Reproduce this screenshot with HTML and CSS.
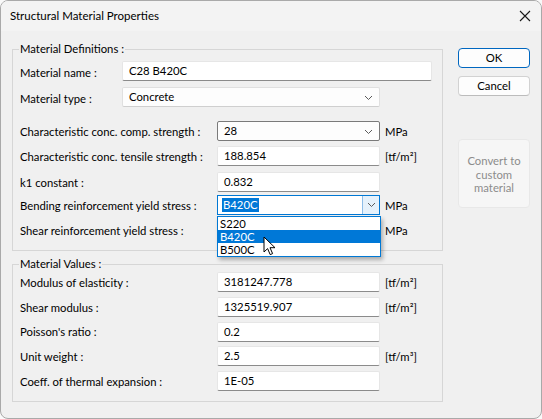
FILE: index.html
```html
<!DOCTYPE html>
<html>
<head>
<meta charset="utf-8">
<link rel="stylesheet" href="styles.css">
</head>
<body>
<div class="window">
  <div class="titlebar">
    <span class="title">Structural Material Properties</span>
    <svg class="close" width="12" height="12" viewBox="0 0 12 12"><path d="M1 1L11 11M11 1L1 11" stroke="#1a1a1a" stroke-width="1.1" fill="none"/></svg>
  </div>
  <div class="content">
    <div class="main">
      <fieldset class="group g1">
        <legend>Material Definitions :</legend>
        <div class="row r1"><span class="label short">Material name :</span><div class="field wide">C28 B420C</div></div>
        <div class="row r2"><span class="label short">Material type :</span><div class="combo type">Concrete<svg class="chev" width="9" height="6" viewBox="0 0 9 6"><path d="M1 1L4.5 4.5L8 1" stroke="#5a5a5a" fill="none"/></svg></div></div>
        <div class="row r3"><span class="label">Characteristic conc. comp. strength :</span><div class="combo hover">28<svg class="chev" width="9" height="6" viewBox="0 0 9 6"><path d="M1 1L4.5 4.5L8 1" stroke="#5a5a5a" fill="none"/></svg></div><span class="unit">MPa</span></div>
        <div class="row r4"><span class="label">Characteristic conc. tensile strength :</span><div class="field">188.854</div><span class="unit">[tf/m²]</span></div>
        <div class="row r5"><span class="label">k1 constant :</span><div class="field">0.832</div></div>
        <div class="row r6"><span class="label">Bending reinforcement yield stress :</span>
          <div class="combo active"><span class="sel">B420C</span><span class="btn"><svg width="9" height="6" viewBox="0 0 9 6"><path d="M1 1L4.5 4.5L8 1" stroke="#5a5a5a" fill="none"/></svg></span>
            <div class="list">
              <div class="item">S220</div>
              <div class="item hl">B420C</div>
              <div class="item">B500C</div>
            </div>
            <svg class="cursor" width="14" height="21" viewBox="0 0 14 21"><path d="M1 1L1 16L4.6 12.6L7.2 18.6L9.6 17.6L7 11.7L12 11.7Z" fill="#fff" stroke="#000" stroke-width="1" stroke-linejoin="miter"/></svg>
          </div>
          <span class="unit">MPa</span></div>
        <div class="row r7"><span class="label">Shear reinforcement yield stress :</span><div class="combo"></div><span class="unit">MPa</span></div>
      </fieldset>
      <fieldset class="group g2">
        <legend>Material Values :</legend>
        <div class="row s1"><span class="label">Modulus of elasticity :</span><div class="field">3181247.778</div><span class="unit">[tf/m²]</span></div>
        <div class="row s2"><span class="label">Shear modulus :</span><div class="field">1325519.907</div><span class="unit">[tf/m²]</span></div>
        <div class="row s3"><span class="label">Poisson's ratio :</span><div class="field">0.2</div></div>
        <div class="row s4"><span class="label">Unit weight :</span><div class="field">2.5</div><span class="unit">[tf/m³]</span></div>
        <div class="row s5"><span class="label">Coeff. of thermal expansion :</span><div class="field">1E-05</div></div>
      </fieldset>
    </div>
    <div class="side">
      <div class="button ok">OK</div>
      <div class="button cancel">Cancel</div>
      <div class="button convert">Convert to<br>custom<br>material</div>
    </div>
  </div>
</div>
</body>
</html>
```

FILE: styles.css
```css
html, body {
  margin: 0;
  padding: 0;
  background: #f9f9f9;
}
body {
  font-family: Lato, "Noto Sans", sans-serif;
  font-size: 11.3px;
  color: #000;
}
.window {
  width: 542px;
  height: 419px;
  box-sizing: border-box;
  border: 1px solid #a9a9a9;
  border-radius: 8px;
  overflow: hidden;
  background: #f0f0f0;
}
.titlebar {
  height: 30px;
  background: #f3f3f3;
  display: flex;
  align-items: center;
  justify-content: space-between;
  padding: 0 9px 0 9px;
}
.title {
  font-size: 11.5px;
  line-height: 16px;
}
.close {
  margin-right: 1px;
}
.content {
  display: flex;
  padding: 10px 0 0 11px;
}
.main {
  width: 431px;
}
.group {
  margin: 0;
  padding: 0 0 10px 7px;
  border: 1px solid #d6d6d6;
  min-width: 0;
}
.group legend {
  margin-left: -1px;
  padding: 0 1px;
  line-height: 16px;
}
.g2 {
  margin-top: 5px;
}
.row {
  display: flex;
  align-items: center;
  height: 20px;
  position: relative;
}
.label {
  width: 197px;
  flex: none;
  white-space: nowrap;
}
.label.short {
  width: 102px;
  padding-top: 2px;
}
.r1 { margin-top: 4px; }
.r2 { margin-top: 6px; }
.r3 { margin-top: 14px; }
.r4 { margin-top: 5px; }
.r5 { margin-top: 6px; }
.r6 { margin-top: 3px; }
.r7 { margin-top: 5px; }
.s1 { margin-top: 0; }
.s2 { margin-top: 5px; }
.s3 { margin-top: 4.5px; }
.s4 { margin-top: 4.5px; }
.s5 { margin-top: 5px; }

.field, .combo {
  box-sizing: border-box;
  width: 163px;
  height: 20px;
  flex: none;
  background: #fff;
  border: 1px solid #e6e6e6;
  border-bottom-color: #8b8b8b;
  border-radius: 2px;
  padding: 0 6px;
  line-height: 18px;
  white-space: nowrap;
  position: relative;
}
.field.wide {
  width: 310px;
}
.combo {
  background: #fdfdfd;
  border-color: #e0e0e0;
  border-bottom-color: #cfcfcf;
}
.combo.type {
  width: 258px;
}
.combo.hover {
  border-color: #7a7a7a;
}
.chev {
  position: absolute;
  right: 6px;
  top: 7px;
}
.unit {
  margin-left: 5px;
  white-space: nowrap;
}
.combo.active {
  border: 1px solid #0078d4;
  background: #fff;
  padding: 0 0 0 4px;
  border-radius: 0;
  display: flex;
  align-items: center;
}
.sel {
  background: #0078d7;
  color: #fff;
  line-height: 14px;
  padding: 0 1px;
}
.btn {
  position: absolute;
  right: 0;
  top: 0;
  bottom: 0;
  width: 16px;
  background: #e5f1fb;
  border-left: 1px solid #8dbde8;
  display: flex;
  align-items: center;
  justify-content: center;
}
.list {
  position: absolute;
  left: -1px;
  top: 20px;
  width: 164px;
  box-sizing: border-box;
  border: 1px solid #0078d4;
  background: #fff;
  box-shadow: 2px 3px 4px rgba(0,0,0,0.28);
  z-index: 5;
}
.item {
  height: 13px;
  line-height: 13px;
  padding-left: 2px;
}
.item.hl {
  background: #0078d7;
  color: #fff;
}
.cursor {
  position: absolute;
  left: 45px;
  top: 40px;
  z-index: 6;
}
.side {
  width: 72px;
  margin-left: 15px;
  padding-top: 7px;
  display: flex;
  flex-direction: column;
}
.button {
  box-sizing: border-box;
  height: 20px;
  border-radius: 4px;
  text-align: center;
  line-height: 18px;
  background: #fdfdfd;
  border: 1px solid #d2d2d2;
  border-bottom-color: #bcbcbc;
}
.ok {
  border: 1px solid #0067c0;
}
.cancel {
  margin-top: 8px;
}
.convert {
  margin-top: 43px;
  height: 69px;
  background: #f6f6f6;
  border: 1px solid #e8e8e8;
  color: #8c8c8c;
  line-height: 13.5px;
  padding-top: 14px;
}
```
